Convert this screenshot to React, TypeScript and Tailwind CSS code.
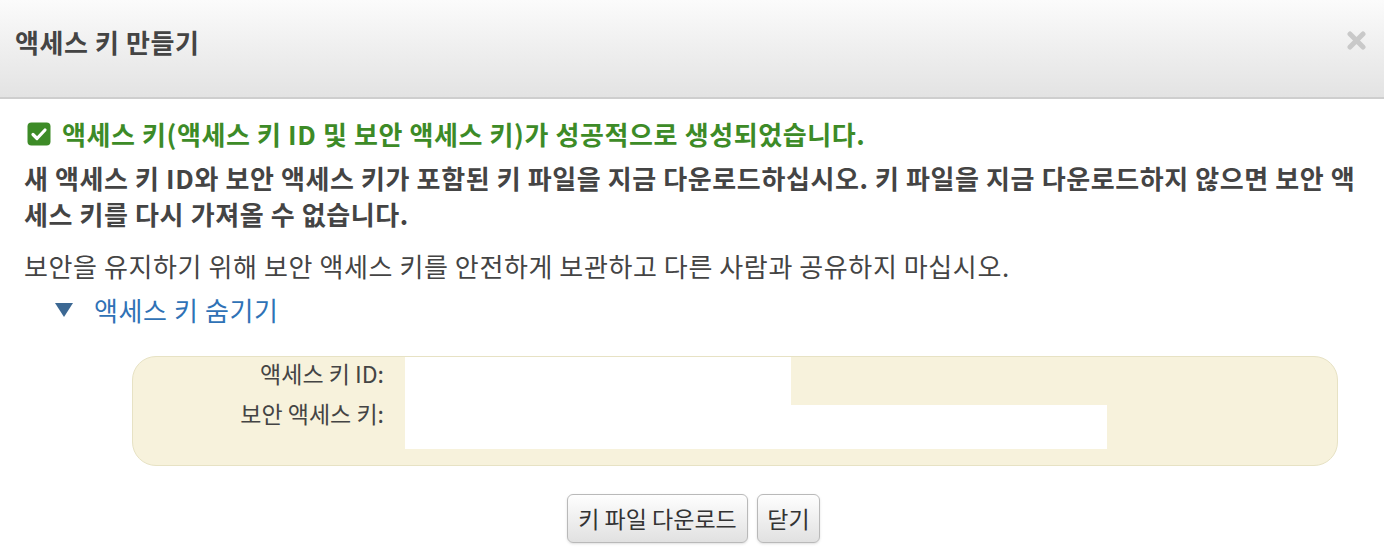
import React from "react";

const font = { fontFamily: '"Noto Sans CJK KR", "Noto Sans", sans-serif' };

function CheckBox() {
    return (
        <svg className="w-[24px] h-[24px] shrink-0" viewBox="0 0 24 24" aria-hidden="true">
            <rect x="0.5" y="0.5" width="23" height="23" rx="4" fill="#3d8b27"/>
            <path d="M6 12.5l4 4 8-8.5" fill="none" stroke="#fff" strokeWidth="3.2" strokeLinecap="round" strokeLinejoin="round"/>
        </svg>
    );
}

function CloseIcon() {
    return (
        <svg className="w-[19px] h-[19px]" viewBox="0 0 19 19" aria-hidden="true">
            <path d="M3 3l13 13M16 3L3 16" stroke="#c9c9c9" strokeWidth="5" strokeLinecap="round"/>
        </svg>
    );
}

export default function App() {
    return (
        <div className="w-[1384px] h-[554px] bg-white overflow-hidden text-[#444] tracking-[0.6px]" style={font}>
            <div className="h-[99px] flex items-center justify-between pl-[15px] pr-[18px] border-b-2 border-[#cecece] bg-gradient-to-b from-[#fbfbfb] to-[#e3e3e3]">
                <h1 className="text-[26px] font-bold leading-[32px] text-[#444] -mt-[13px]">액세스 키 만들기</h1>
                <div className="-mt-[16px]"><CloseIcon/></div>
            </div>

            <div className="pl-[24px] pr-[20px]">
                <div className="mt-[19px] flex items-center gap-[11px] pl-[3px] h-[32px]">
                    <CheckBox/>
                    <span className="text-[26px] font-bold text-[#3d8b27] leading-[32px]">
                        액세스 키(액세스 키 ID 및 보안 액세스 키)가 성공적으로 생성되었습니다.
                    </span>
                </div>

                <p className="mt-[10px] text-[26px] font-bold leading-[36px] text-[#444] break-all">
                    새 액세스 키 ID와 보안 액세스 키가 포함된 키 파일을 지금 다운로드하십시오. 키 파일을 지금 다운로드하지 않으면 보안 액세스 키를 다시 가져올 수 없습니다.
                </p>

                <p className="mt-[18px] text-[26px] leading-[32px] text-[#444]">
                    보안을 유지하기 위해 보안 액세스 키를 안전하게 보관하고 다른 사람과 공유하지 마십시오.
                </p>

                <div className="mt-[12px] flex items-center h-[32px] pl-[31px]">
                    <svg className="w-[18px] h-[14px]" viewBox="0 0 18 14" aria-hidden="true">
                        <path d="M0 0h18L9 14z" fill="#3c6893"/>
                    </svg>
                    <span className="ml-[21px] text-[26px] leading-[32px] text-[#2f72b6]">액세스 키 숨기기</span>
                </div>
            </div>

            <div className="mt-[30px] ml-[132px] w-[1206px] h-[110px] rounded-[24px] border border-[#e7e2c4] bg-[#f7f2dc] overflow-hidden">
                <div className="flex h-[48px]">
                    <div className="w-[251px] text-right text-[23px] leading-[32px] text-[#444] tracking-normal">액세스 키 ID:</div>
                    <div className="ml-[21px] w-[386px] bg-white"></div>
                </div>
                <div className="flex h-[44px]">
                    <div className="w-[251px] text-right text-[23px] leading-[32px] text-[#444] tracking-normal -mt-[8px]">보안 액세스 키:</div>
                    <div className="ml-[21px] w-[702px] bg-white"></div>
                </div>
            </div>

            <div className="mt-[28px] flex justify-center gap-[9px] pl-[3px]">
                <button className="h-[49px] w-[181px] rounded-[6px] border border-[#b9b9b9] bg-gradient-to-b from-[#fefefe] to-[#e1e1e1] text-[23px] text-[#333] tracking-normal shadow-sm">
                    키 파일 다운로드
                </button>
                <button className="h-[49px] w-[63px] rounded-[6px] border border-[#b9b9b9] bg-gradient-to-b from-[#fefefe] to-[#e1e1e1] text-[23px] text-[#333] tracking-normal shadow-sm">
                    닫기
                </button>
            </div>
        </div>
    );
}
